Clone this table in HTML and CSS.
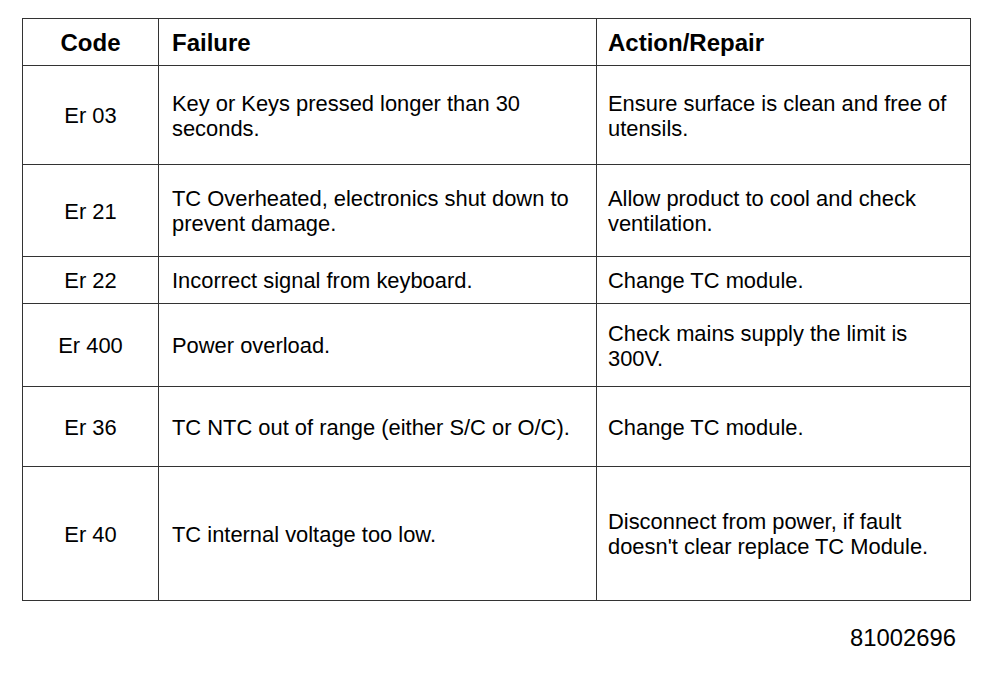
FILE: index.html
```html
<!DOCTYPE html>
<html>
<head>
<meta charset="utf-8">
<link rel="stylesheet" href="styles.css">
</head>
<body>
<div class="page">
<table class="codes">
  <colgroup><col class="c1"><col class="c2"><col class="c3"></colgroup>
  <thead>
    <tr class="h"><th class="code">Code</th><th>Failure</th><th class="act">Action/Repair</th></tr>
  </thead>
  <tbody>
    <tr class="r1"><td class="code">Er 03</td><td>Key or Keys pressed longer than 30<br>seconds.</td><td class="act">Ensure surface is clean and free of<br>utensils.</td></tr>
    <tr class="r2"><td class="code">Er 21</td><td>TC Overheated, electronics shut down to<br>prevent damage.</td><td class="act">Allow product to cool and check<br>ventilation.</td></tr>
    <tr class="r3"><td class="code">Er 22</td><td>Incorrect signal from keyboard.</td><td class="act">Change TC module.</td></tr>
    <tr class="r4"><td class="code">Er 400</td><td>Power overload.</td><td class="act">Check mains supply the limit is<br>300V.</td></tr>
    <tr class="r5"><td class="code">Er 36</td><td>TC NTC out of range (either S/C or O/C).</td><td class="act">Change TC module.</td></tr>
    <tr class="r6"><td class="code">Er 40</td><td>TC internal voltage too low.</td><td class="act">Disconnect from power, if fault<br>doesn't clear replace TC Module.</td></tr>
  </tbody>
</table>
<div class="ref">81002696</div>
</div>
</body>
</html>
```
FILE: styles.css
```css
html, body { margin: 0; padding: 0; background: #fff; }
body { font-family: "Liberation Sans", Arial, sans-serif; color: #000; }
.page { padding: 18px 0 0 22px; width: 948px; }
.codes { border-collapse: collapse; table-layout: fixed; width: 948px; }
.c1 { width: 136px; }
.c2 { width: 438px; }
.c3 { width: 374px; }
.codes th, .codes td { border: 1px solid #333; padding: 0 0 0 13px; text-align: left; vertical-align: middle; line-height: 25px; white-space: nowrap; }
.codes th { font-size: 24px; font-weight: bold; }
.codes td { font-size: 21.9px; padding-top: 1px; }
.codes .act { padding-left: 11px; }
.codes .code { text-align: center; padding-left: 0; }
.h { height: 47px; }
.r1 { height: 99px; }
.r2 { height: 92px; }
.r3 { height: 47px; }
.r4 { height: 83px; }
.r5 { height: 80px; }
.r6 { height: 134px; }
.ref { text-align: right; font-size: 23.8px; margin-top: 23px; padding-right: 14px; }
```
